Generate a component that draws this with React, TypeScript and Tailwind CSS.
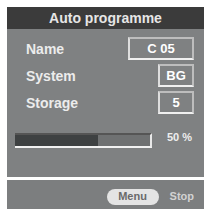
import React from "react";

const font = { fontFamily: '"Liberation Sans", Arial, sans-serif' };

function Row({ label, value, wide }: { label: string; value: string; wide?: boolean }) {
  return (
    <div className="flex items-center justify-between h-[23px]">
      <span className="text-[14px] font-bold text-[#ececec] leading-none">{label}</span>
      <div
        className={`${wide ? "w-[66px]" : "w-[36px]"} h-[23px] flex items-center justify-center border-2 border-[#bdbdbd] border-b-[#f0f0f0] border-l-[#dedede] text-[13px] font-bold text-white leading-none`}
      >
        {value}
      </div>
    </div>
  );
}

export default function App() {
  return (
    <div className="w-[210px] h-[209px] bg-white pt-[7px] px-[6px] overflow-hidden" style={font}>
      <div className="w-[197px] ml-[1px]">
        {/* title */}
        <div className="h-[22px] bg-[#3b3b3b] flex items-center justify-center">
          <span className="text-[14px] font-bold text-[#e6e6e6] leading-none">Auto programme</span>
        </div>

        {/* body */}
        <div className="h-[148px] bg-[#7f8182] pt-[8px] pl-[19px] pr-[10px]">
          <div className="flex flex-col gap-[4px]">
            <Row label="Name" value="C 05" wide />
            <Row label="System" value="BG" />
            <Row label="Storage" value="5" />
          </div>

          <div className="flex items-start mt-[19px] -ml-[11px]">
            <div className="w-[137px] h-[15px] bg-[#6f7172] border-t-2 border-t-[#555] border-b-2 border-b-[#f2f2f2] border-r-2 border-r-[#e8e8e8] flex">
              <div className="w-[83px] h-full bg-[#3e4142]" />
            </div>
            <span className="ml-[15px] -mt-[1px] text-[11px] font-bold text-[#eeeeee] leading-none">50 %</span>
          </div>
        </div>

        {/* bottom bar */}
        <div className="h-[29px] mt-[3px] bg-[#7c7e7f] flex items-center justify-end pr-[10px] pt-[4px]">
          <div className="w-[52px] h-[16px] rounded-full bg-[#e4e4e4] flex items-center justify-center">
            <span className="text-[11px] font-bold text-[#6a6a6a] leading-none">Menu</span>
          </div>
          <span className="ml-[11px] text-[11px] font-bold text-[#d2d2d2] leading-none">Stop</span>
        </div>
      </div>
    </div>
  );
}
